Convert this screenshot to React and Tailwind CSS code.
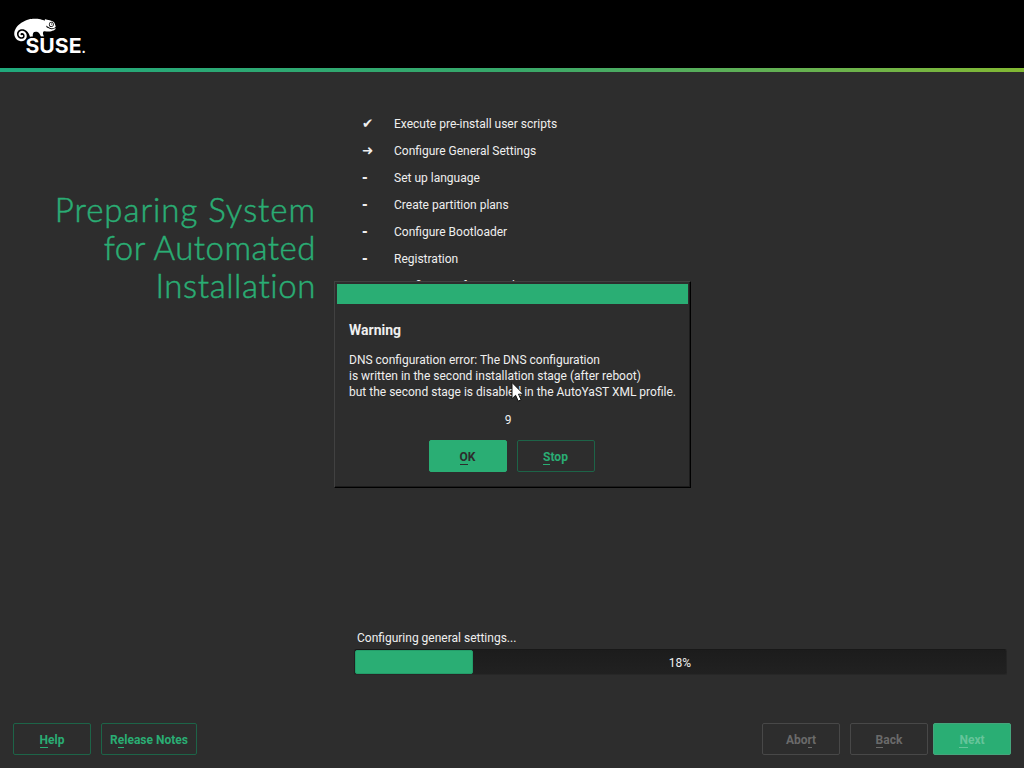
import React from "react";
import { FaSuse } from "react-icons/fa";

const steps = [
  { mark: "✔", label: "Execute pre-install user scripts" },
  { mark: "➜", label: "Configure General Settings" },
  { mark: "-", label: "Set up language" },
  { mark: "-", label: "Create partition plans" },
  { mark: "-", label: "Configure Bootloader" },
  { mark: "-", label: "Registration" },
  { mark: "-", label: "Configure Software selections" },
];

const variants = {
  outline: "border-[#1d6448] text-[#2aad74]",
  disabled: "border-[#484848] text-[#6a6a6a]",
  primary: "border-[#2aae74] bg-[#2aae74] text-[#2d2d2d]",
  primaryDisabled: "border-[#45a57c] bg-[#2aae74] text-[#66c49a]",
};

function Button({ before = "", hotkey, after = "", variant, width = "w-[78px]" }) {
  return (
    <button
      className={`flex h-8 items-center justify-center rounded-[2px] border pt-[2px] text-[12px] leading-4 font-bold whitespace-pre ${width} ${variants[variant]}`}
    >
      {before}
      <span className="h-4 border-b border-current">{hotkey}</span>
      {after}
    </button>
  );
}

function Logo() {
  return (
    <div className="relative h-[68px] w-[110px] text-white">
      <FaSuse className="absolute top-[12px] left-[14px] h-[36px] w-[42px]" preserveAspectRatio="none" />
      <svg className="absolute top-[34px] left-[24px]" width="66" height="22">
        <text
          x="1.5"
          y="18.5"
          textLength="56"
          lengthAdjust="spacingAndGlyphs"
          fill="white"
          stroke="black"
          strokeWidth="3"
          paintOrder="stroke"
          className="font-['Inter',sans-serif] text-[20px] font-bold"
        >
          SUSE
        </text>
        <text x="57.5" y="18.5" fill="white" className="font-['Inter',sans-serif] text-[13px] font-bold">
          .
        </text>
      </svg>
    </div>
  );
}

function WarningDialog() {
  return (
    <section className="absolute top-[281px] left-[334px] h-[207px] w-[357px] border border-t-[#414141] border-r-black border-b-black border-l-[#414141] bg-[#2d2d2d] px-[2px] pt-[2px] shadow-[inset_-1px_-1px_0_#1c1c1c]">
      <div className="h-5 bg-[#2aae74]" />
      <div className="flex flex-col px-3">
        <h2 className="mt-[17px] text-[14px] leading-[18px] font-bold">Warning</h2>
        <p className="mt-[13px] text-[12px] leading-4 whitespace-pre">
          {"DNS configuration error: The DNS configuration\nis written in the second installation stage (after reboot)\nbut the second stage is disabled in the AutoYaST XML profile."}
        </p>
        <p className="mt-3 pr-[9px] text-center text-[12px] leading-4">9</p>
        <div className="mt-3 flex justify-center gap-[10px] pr-[2px]">
          <Button hotkey="O" after="K" variant="primary" />
          <Button hotkey="S" after="top" variant="outline" />
        </div>
      </div>
    </section>
  );
}

function Cursor() {
  return (
    <svg className="absolute top-[381px] left-[510px]" width="16" height="22" viewBox="0 0 16 22">
      <path d="M2 1.5v16.2l3.6-3.4 2.6 5.8 2.9-1.3-2.6-5.6h5z" fill="white" stroke="#111" strokeWidth="1" />
    </svg>
  );
}

export default function App() {
  return (
    <div className="relative flex h-[768px] w-[1024px] flex-col overflow-hidden bg-[#2d2d2d] font-['Roboto',sans-serif] text-[12px] text-[#efefef]">
      <header className="h-[68px] bg-black">
        <Logo />
      </header>
      <div className="h-1 bg-linear-to-r from-[#20a97c] via-[#37a86a] to-[#82b832]" />

      <main className="flex h-[565px]">
        <h1 className="flex w-[316px] flex-col items-end pt-[118px] font-['Lato',sans-serif] text-[33px] leading-[38px] font-light whitespace-nowrap text-[#2aad74] [-webkit-text-stroke:0.5px_#2aad74]">
          <span className="tracking-[0.95px]">Preparing System</span>
          <span className="tracking-[0.5px]">for Automated</span>
          <span className="tracking-[0.6px]">Installation</span>
        </h1>
        <ul className="ml-[46px] pt-[38px]">
          {steps.map((s) => (
            <li key={s.label} className="flex h-[27px] items-center">
              <span className="w-8 font-['DejaVu_Sans',sans-serif] text-[13.5px] font-bold">{s.mark}</span>
              <span>{s.label}</span>
            </li>
          ))}
        </ul>
      </main>

      <section className="-mt-[7px] pr-[17px] pl-[354px]">
        <p className="pl-[3px] leading-4">Configuring general settings...</p>
        <div className="relative mt-[3px] flex h-[26px] items-center rounded-[3px] border border-t-[#181818] border-r-[#242424] border-b-[#272727] border-l-[#202020] bg-linear-to-b from-[#1c1c1c] to-[#212121]">
          <div className="h-6 w-[118px] rounded-[2px] border border-[#239d69] bg-[#2aae74]" />
          <span className="absolute inset-x-0 top-[5px] pr-px text-center leading-4">18%</span>
        </div>
      </section>

      <footer className="mt-[48px] flex pr-[13px] pl-[13px]">
        <Button hotkey="H" after="elp" variant="outline" />
        <div className="ml-[10px]">
          <Button before="R" hotkey="e" after="lease Notes" variant="outline" width="w-24" />
        </div>
        <div className="ml-auto flex gap-[10px]">
          <Button before="Abo" hotkey="r" after="t" variant="disabled" />
          <Button hotkey="B" after="ack" variant="disabled" />
        </div>
        <div className="ml-[5px]">
          <Button hotkey="N" after="ext" variant="primaryDisabled" />
        </div>
      </footer>

      <WarningDialog />
      <Cursor />
    </div>
  );
}
